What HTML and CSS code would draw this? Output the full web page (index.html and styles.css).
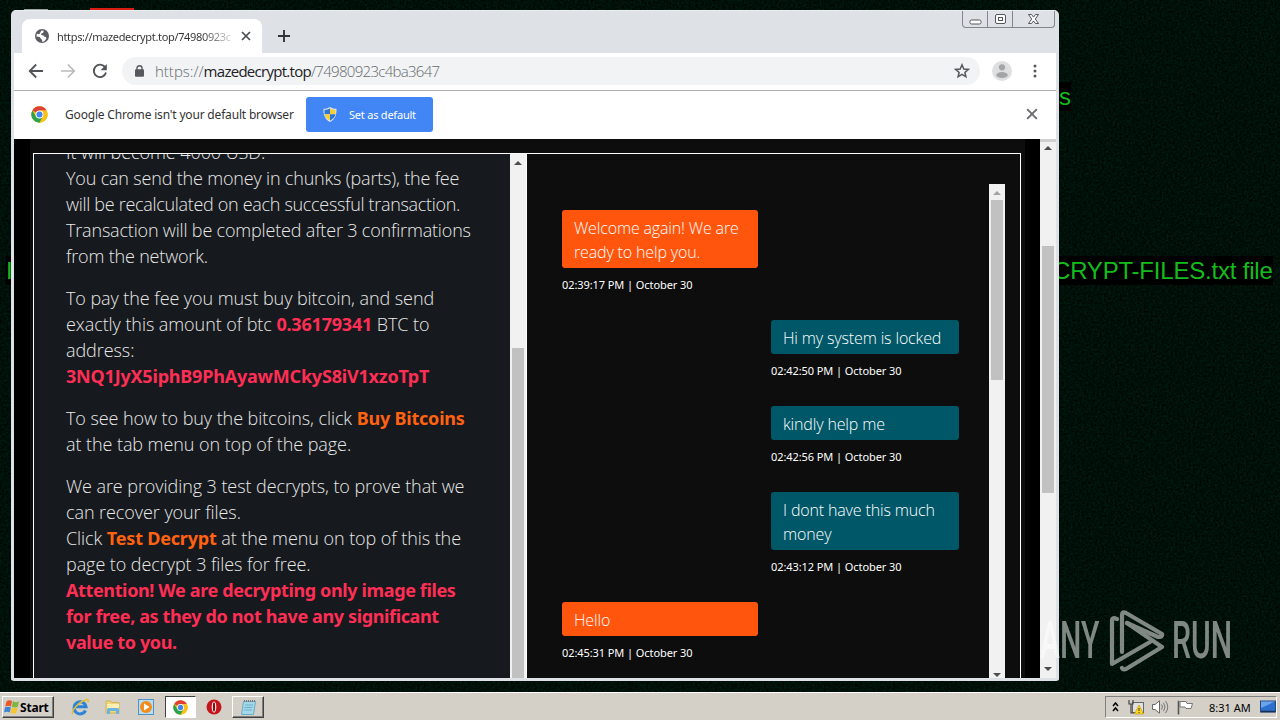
FILE: index.html
```
<!DOCTYPE html>
<html>
<head>
    <meta charset="utf-8">
    <title>Desktop</title>
    <link rel="stylesheet" href="styles.css">
</head>
<body>
    <div class="desktop">
        <svg class="wallpaper" width="1280" height="720">
            <filter id="grain" color-interpolation-filters="sRGB">
                <feTurbulence type="fractalNoise" baseFrequency="0.45" numOctaves="2" seed="4"/>
                <feColorMatrix values="0 0 0 0 0  0.16 0 0 0 -0.015  0.07 0 0 0 0  0 0 0 0 1"/>
            </filter>
            <rect width="1280" height="720" filter="url(#grain)"/>
        </svg>
        <div class="shortcut-red"></div>
        <div class="shortcut-gray"></div>
        <div class="wall-text wall-s">s</div>
        <div class="wall-text wall-left">I</div>
        <div class="wall-text wall-file">CRYPT-FILES.txt file</div>

        <div class="window">
            <div class="tab-strip">
                <div class="tab">
                    <svg class="globe" width="14" height="14" viewBox="0 0 14 14">
                        <circle cx="7" cy="7" r="7" fill="#5a5d61"/>
                        <path d="M6.2 1.5 8.8 1.8 8.2 3.8 6.3 4.5 6.2 6 8.6 6.4 9 7.6 11 8.1 11.4 9.8 9.3 12.2 7.1 13 7.2 10.9 5.6 9.6 4.8 8 1.4 7.4 1.9 4.8 4.1 5.3 5.1 4.1Z" fill="#fff"/>
                    </svg>
                    <span class="tab-title">https://mazedecrypt.top/74980923c</span>
                    <svg class="tab-close" width="10" height="10" viewBox="0 0 10 10"><path d="M1 1l8 8M9 1l-8 8" stroke="#4a4d51" stroke-width="1.7"/></svg>
                </div>
                <svg class="new-tab" width="12" height="12" viewBox="0 0 12 12"><path d="M6 0v12M0 6h12" stroke="#303338" stroke-width="1.9"/></svg>
                <div class="window-buttons">
                    <div class="wb"><svg width="13" height="11" viewBox="0 0 13 11"><rect x="1" y="6" width="11" height="4" rx="1.5" fill="#fff" stroke="#54565e"/></svg></div>
                    <div class="wb"><svg width="13" height="11" viewBox="0 0 13 11"><rect x="1.5" y=".5" width="10" height="9" rx="1.5" fill="#fff" stroke="#54565e"/><rect x="4.5" y="3.5" width="4" height="3" fill="#fff" stroke="#54565e"/></svg></div>
                    <div class="wb wb-close"><svg width="13" height="11" viewBox="0 0 13 11"><path d="M1.5.5h3l2 2.6 2-2.6h3L8.3 5l3.2 4.5h-3l-2-2.6-2 2.6h-3L4.7 5Z" fill="#fff" stroke="#54565e"/></svg></div>
                </div>
            </div>
            <div class="toolbar">
                <svg class="nav" width="16" height="16" viewBox="0 0 16 16"><path d="M15 8H2M8.2 1.5 1.7 8l6.5 6.5" fill="none" stroke="#505357" stroke-width="1.8"/></svg>
                <svg class="nav" width="16" height="16" viewBox="0 0 16 16"><path d="M1 8h13M7.8 1.5 14.3 8l-6.5 6.5" fill="none" stroke="#b9babc" stroke-width="1.6"/></svg>
                <svg class="nav" width="16" height="16" viewBox="0 0 16 16"><path d="M13.2 4.4A6.2 6.2 0 1 0 14 9.6" fill="none" stroke="#505357" stroke-width="1.9"/><path d="M14.8 1v6.2H8.6Z" fill="#505357"/></svg>
                <div class="address-bar">
                    <svg class="lock" width="9" height="12" viewBox="0 0 9 12"><rect y="4.3" width="9" height="7.4" rx="1" fill="#55585d"/><path d="M2 5V3a2.5 2.3 0 0 1 5 0v2" fill="none" stroke="#55585d" stroke-width="1.4"/></svg>
                    <span class="url"><span>https://</span><b>mazedecrypt.top</b><span class="path">/74980923c4ba3647</span></span>
                    <svg class="star" width="16" height="16" viewBox="0 0 16 16"><path d="M8 1.8 9.8 6l4.5.4-3.4 3 1 4.4L8 11.4l-3.9 2.4 1-4.4-3.4-3L6.2 6Z" fill="none" stroke="#55585d" stroke-width="1.5"/></svg>
                </div>
                <svg class="avatar" width="20" height="20" viewBox="0 0 20 20"><circle cx="10" cy="10" r="10" fill="#dedfe1"/><circle cx="10" cy="6.3" r="3.1" fill="#a5a5a7"/><ellipse cx="10" cy="14" rx="5.8" ry="3" fill="#a5a5a7"/></svg>
                <svg class="menu" width="4" height="14" viewBox="0 0 4 14"><circle cx="2" cy="2" r="1.5" fill="#55585d"/><circle cx="2" cy="7" r="1.5" fill="#55585d"/><circle cx="2" cy="12" r="1.5" fill="#55585d"/></svg>
            </div>
            <div class="infobar">
                <svg class="chrome-logo" width="17" height="17" viewBox="0 0 48 48"><use href="#chrome"/></svg>
                <span class="info-text">Google Chrome isn't your default browser</span>
                <div class="default-btn">
                    <svg width="14" height="15" viewBox="0 0 14 15">
                        <path d="M7 0c2 1.3 4 1.8 6.5 1.8C13.7 8 12 12.5 7 15 2 12.5.3 8 .5 1.8 3 1.8 5 1.3 7 0Z" fill="#dfe9f4"/>
                        <path d="M7 1.200V7.300H1.500V2.700C3.500 2.700 5.400 2.200 7 1.200Z" fill="#2f75d6"/>
                        <path d="M7 1.200c1.600 1 3.500 1.500 5.500 1.500v4.600H7Z" fill="#f7cf32"/>
                        <path d="M1.600 7.300H7v6.400C3.800 12 2 10 1.600 7.300Z" fill="#f7cf32"/>
                        <path d="M7 7.300h5.400C12 10 10.200 12 7 13.700Z" fill="#2f75d6"/>
                    </svg>
                    <span>Set as default</span>
                </div>
                <svg class="info-close" width="12" height="12" viewBox="0 0 12 12"><path d="M1.2 1.2l9.6 9.6M10.8 1.2l-9.6 9.6" stroke="#696b6f" stroke-width="1.9"/></svg>
            </div>

            <div class="page">
                <div class="page-body">
                    <div class="panels">
                        <div class="instructions">
                            <p>It will become 4000 USD.<br>
                            <span class="mid">You can send the money in chunks (parts), the fee</span><br>
                            <span class="tight">will be recalculated on each successful transaction.</span><br>
                            <span class="mid">Transaction will be completed after 3 confirmations</span><br>
                            <span class="mid">from the network.</span></p>
                            <p>To pay the fee you must buy bitcoin, and send<br>
                            exactly this amount of btc <b class="red">0.36179341</b> BTC to<br>
                            address:<br>
                            <b class="red">3NQ1JyX5iphB9PhAyawMCkyS8iV1xzoTpT</b></p>
                            <p>To see how to buy the bitcoins, click <b class="orange">Buy Bitcoins</b><br>
                            at the tab menu on top of the page.</p>
                            <p>We are providing 3 test decrypts, to prove that we<br>
                            can recover your files.<br>
                            Click <b class="orange test">Test Decrypt</b> at the menu on top of this the<br>
                            page to decrypt 3 files for free.<br>
                            <b class="red warning">Attention! We are decrypting only image files<br>
                            for free, as they do not have any significant<br>
                            value to you.</b></p>
                        </div>
                        <div class="scrollbar scroll-left">
                            <i class="arrow up"></i>
                            <div class="thumb"></div>
                        </div>
                        <div class="chat">
                            <div class="messages">
                                <div class="message support">
                                    <div class="bubble">Welcome again! We are<br>ready to help you.</div>
                                    <div class="time">02:39:17 PM | October 30</div>
                                </div>
                                <div class="message user">
                                    <div class="bubble">Hi my system is locked</div>
                                    <div class="time">02:42:50 PM | October 30</div>
                                </div>
                                <div class="message user">
                                    <div class="bubble">kindly help me</div>
                                    <div class="time">02:42:56 PM | October 30</div>
                                </div>
                                <div class="message user">
                                    <div class="bubble">I dont have this much<br>money</div>
                                    <div class="time">02:43:12 PM | October 30</div>
                                </div>
                                <div class="message support">
                                    <div class="bubble">Hello</div>
                                    <div class="time">02:45:31 PM | October 30</div>
                                </div>
                            </div>
                            <div class="scrollbar scroll-chat">
                                <i class="arrow up dim"></i>
                                <div class="thumb"></div>
                                <i class="arrow down"></i>
                            </div>
                        </div>
                    </div>
                </div>
                <div class="scrollbar scroll-page">
                    <i class="arrow up"></i>
                    <div class="thumb"></div>
                    <i class="arrow down"></i>
                </div>
            </div>
        </div>

        <div class="watermark">
            <span class="wm-text wm-any">ANY</span>
            <svg width="56" height="64" viewBox="0 0 56 64" fill="none" stroke="#fff" stroke-width="4.2" stroke-linejoin="round" stroke-linecap="round">
                <path d="M8 10 5 9Q3 9 3 12V55L41 33"/>
                <path d="M13 43V6Q13 2 17 4L53 25Q54 28 49 28L18 14"/>
                <path d="M18 14 53 38 17 60Q14 61 13 59"/>
            </svg>
            <span class="wm-text wm-run">RUN</span>
        </div>

        <div class="taskbar">
            <div class="start">
                <svg width="16" height="16" viewBox="0 0 16 16">
                    <path d="M2.5 2.5Q5 .5 8 2L7 7.5Q4.500 6 1.300 7.500Z" fill="#e8562a"/>
                    <path d="M8.800 2.300Q12 4 15 2.200L13.800 7.800Q11 9 7.800 7.800Z" fill="#7eb540"/>
                    <path d="M1.100 8.300Q4 7 6.900 8.300L5.800 13.500Q3 12 0 13.500Z" fill="#3f84d5"/>
                    <path d="M7.700 8.600Q10.500 10 13.600 8.600L12.400 14Q9.500 15.500 6.600 14Z" fill="#f6c52e"/>
                </svg>
                <span>Start</span>
            </div>
            <div class="quick">
                <svg width="18" height="18" viewBox="0 0 18 18">
                    <path d="M14.500 12.500A6 6 0 1 1 15 8.800H5" fill="none" stroke="#2b84d8" stroke-width="3"/>
                    <path d="M2 16C-1 14 7 4 16 1.500c2 0 1 2 .5 3" fill="none" stroke="#e6bd35" stroke-width="1.500"/>
                </svg>
                <svg width="18" height="18" viewBox="0 0 18 18">
                    <path d="M2 3h5l1 1.500h7V15H2Z" fill="#efd57c" stroke="#d3b354"/>
                    <path d="M3 6h12v4H3Z" fill="#fbefb4"/>
                    <path d="M3 16v-4q0-2 2-2h8q2 0 2 2v4h-3v-3H6v3Z" fill="#6ab4df"/>
                </svg>
                <svg width="18" height="18" viewBox="0 0 18 18">
                    <rect x="1.500" y="1.500" width="15" height="15" fill="#b9dcf5" stroke="#4e93cb"/>
                    <circle cx="9" cy="9" r="6" fill="#f28c1c"/>
                    <path d="M7 5.500v7L12.500 9Z" fill="#fff"/>
                </svg>
            </div>
            <div class="task active">
                <svg width="15" height="15" viewBox="0 0 48 48">
                    <g id="chrome">
                        <circle cx="24" cy="24" r="23" fill="#fbc116"/>
                        <path d="M24 24 4 12.500A23 23 0 0 1 44 12.500H24Z" fill="#de4032"/>
                        <path d="M4 12.500A23 23 0 0 0 24 47L34 30 24 24 14 29.500Z" fill="#2ba24c"/>
                        <path d="M44 12.500H24L34 30 24 47A23 23 0 0 0 44 12.500Z" fill="#fbc116"/>
                        <circle cx="24" cy="24" r="11" fill="#fff"/>
                        <circle cx="24" cy="24" r="8.500" fill="#4386f0"/>
                    </g>
                </svg>
            </div>
            <svg class="opera" width="16" height="16" viewBox="0 0 16 16"><circle cx="8" cy="8" r="7.500" fill="#c3161c"/><ellipse cx="8" cy="8" rx="2.300" ry="5.500" fill="#fff"/><ellipse cx="8" cy="8" rx="1.200" ry="4.800" fill="#8b1015"/></svg>
            <div class="task">
                <svg width="17" height="17" viewBox="0 0 17 17"><path d="M3.500 2.500h12l-2 13h-12Z" fill="#a5d9e9" stroke="#6eaac4"/><path d="M4 2h12" stroke="#777" stroke-width="2" stroke-dasharray="1 1"/><path d="M5 6h8M4.500 8.500h8M4 11h8" stroke="#6bb1cb"/></svg>
            </div>
            <div class="tray">
                <svg width="7" height="10" viewBox="0 0 7 10"><path d="M1 4l2.500-3L6 4M1 9l2.500-3L6 9" fill="none" stroke="#000" stroke-width="1.500"/></svg>
                <svg class="tray-net" width="16" height="16" viewBox="0 0 16 16"><rect x="4.500" y="3.500" width="11" height="10" fill="#e1e2df" stroke="#65676a"/><path d="M1 1v4h4V1M3 5v9h3" fill="none" stroke="#444" stroke-width="1.200"/><path d="M11 6l4.500 9h-9Z" fill="#ffd91f" stroke="#bb9400" stroke-width=".6"/><path d="M11 9v3M11 13v1" stroke="#333"/></svg>
                <svg class="tray-sound" width="17" height="14" viewBox="0 0 17 14"><path d="M.5 4.500H3L7.500.8v12.400L3 9.500H.5Z" fill="#fff" stroke="#666"/><path d="M9.500 4.500q2 2.500 0 5M11.500 2.800q3 4.200 0 8.400M13.500 1q4.500 6 0 12" fill="none" stroke="#777"/></svg>
                <svg class="tray-flag" width="17" height="15" viewBox="0 0 17 15"><path d="M1.500 14.500V.8" stroke="#555" stroke-width="1.600"/><path d="M3 1.500h6l1 2h5.500l-1.500 5H9l-1-1.500H3Z" fill="#fff" stroke="#777"/></svg>
                <span class="clock">8:31 AM</span>
                <svg class="tray-desk" width="16" height="14" viewBox="0 0 16 14"><rect x=".5" y="1" width="15" height="11" fill="#2c6fce" stroke="#24477c"/><path d="M1 1.500h14L1 8Z" fill="#6aa4ea"/><path d="M1 11.500h14" stroke="#172e55" stroke-width="1.500"/></svg>
            </div>
        </div>
    </div>
</body>
</html>
```
FILE: styles.css
```
* {
    box-sizing: border-box;
}

body {
    margin: 0;
    overflow: hidden;
    font-family: "Noto Sans", "Open Sans", sans-serif;
}

svg {
    display: block;
    flex-shrink: 0;
}

.desktop {
    position: relative;
    width: 1280px;
    height: 720px;
    background-color: #00100a;
    overflow: hidden;
}

.wallpaper {
    position: absolute;
    left: 0;
    top: 0;
}

.shortcut-red,
.shortcut-gray {
    position: absolute;
    top: 8px;
    left: 90px;
    width: 44px;
    height: 4px;
    background-color: #d91d12;
}

.shortcut-gray {
    top: 9px;
    left: 24px;
    width: 24px;
    background-color: #9aa09d;
}

.wall-text {
    position: absolute;
    height: 29px;
    line-height: 30px;
    font-family: "Liberation Sans", sans-serif;
    font-size: 24px;
    color: #14bd1c;
    background-color: #000;
    white-space: nowrap;
}

.wall-s {
    left: 1059px;
    top: 82px;
}

.wall-left {
    left: 6px;
    top: 256px;
}

.wall-file {
    left: 1053px;
    top: 256px;
    letter-spacing: -0.2px;
}

/* browser window */
.window {
    position: absolute;
    left: 11px;
    top: 10px;
    width: 1048px;
    height: 671px;
    display: flex;
    flex-direction: column;
    border: 3px solid #dee1e6;
    border-top: 1px solid #eceef1;
    border-radius: 5px 5px 3px 3px;
    background-color: #fff;
    overflow: hidden;
}

.tab-strip {
    display: flex;
    align-items: flex-start;
    height: 42px;
    flex-shrink: 0;
    background-color: #dee1e6;
}

.tab {
    display: flex;
    align-items: center;
    width: 240px;
    height: 34px;
    margin: 8px 0 0 8px;
    padding-left: 13px;
    border-radius: 8px 8px 0 0;
    background-color: #fff;
}

.tab-title {
    width: 176px;
    margin-left: 8px;
    font-size: 11px;
    letter-spacing: -0.34px;
    overflow: hidden;
    white-space: nowrap;
    color: transparent;
    background: linear-gradient(to right, #333 145px, rgba(60, 60, 60, 0.15) 176px);
    -webkit-background-clip: text;
    background-clip: text;
}

.tab-close {
    margin-left: 8px;
}

.new-tab {
    margin: 19px 0 0 16px;
}

.window-buttons {
    display: flex;
    width: 93px;
    height: 17px;
    margin-left: auto;
    margin-right: 1px;
    border: 1px solid #85878f;
    border-top: 0;
    border-radius: 0 0 4px 4px;
}

.wb {
    display: flex;
    align-items: center;
    justify-content: center;
    width: 25px;
    border-right: 1px solid #85878f;
}

.wb-close {
    width: 41px;
    border-right: 0;
}

.toolbar {
    display: flex;
    align-items: center;
    height: 38px;
    flex-shrink: 0;
    padding-left: 14px;
    padding-bottom: 2px;
    border-bottom: 1px solid #b0b0b0;
}

.nav {
    margin-right: 16px;
}

.address-bar {
    display: flex;
    align-items: center;
    width: 858px;
    height: 28px;
    margin-left: -2px;
    padding: 0 10px 0 13px;
    border-radius: 14px;
    background-color: #f1f3f4;
}

.url {
    margin-left: 11px;
    font-family: "Open Sans", sans-serif;
    font-size: 15px;
    font-weight: 300;
    color: #66696d;
}

.url b {
    font-weight: 400;
    letter-spacing: -0.72px;
    color: #202124;
}

.path {
    letter-spacing: -0.7px;
}

.star {
    margin-left: auto;
}

.avatar {
    margin-left: 12px;
}

.menu {
    margin-left: 21px;
}

.infobar {
    display: flex;
    align-items: center;
    height: 48px;
    flex-shrink: 0;
    padding: 0 18px 2px 17px;
}

.info-text {
    width: 229px;
    margin-left: 17px;
    font-size: 12px;
    letter-spacing: -0.18px;
    white-space: nowrap;
    color: #333;
}

.default-btn {
    display: flex;
    align-items: center;
    width: 127px;
    height: 35px;
    margin-left: 12px;
    padding-left: 17px;
    border-radius: 3px;
    background-color: #4285f4;
    color: #fff;
    font-size: 11px;
    letter-spacing: -0.22px;
    white-space: nowrap;
}

.default-btn span {
    margin-left: 12px;
}

.info-close {
    margin-left: auto;
}

/* page */
.page {
    display: flex;
    height: 539px;
    background-color: #000;
}

.page-body {
    width: 1011px;
    margin-right: 15px;
    padding: 14px 4px 0 19px;
    background: linear-gradient(to right, #000 16px, #0d0d0d 16px);
}

.panels {
    display: flex;
    height: 525px;
    border: 1px solid #fff;
    border-bottom: 0;
    overflow: hidden;
}

.instructions {
    width: 476px;
    height: 524px;
    flex-shrink: 0;
    padding-left: 32px;
    overflow: hidden;
    background-color: #16191d;
    font-family: "Open Sans", sans-serif;
    font-size: 18px;
    font-weight: 300;
    line-height: 26px;
    letter-spacing: -0.07px;
    color: #e8e8e8;
    white-space: nowrap;
}

.instructions p {
    margin: 0 0 16px;
}

.instructions p:first-child {
    margin-top: -16px;
    padding-top: 1px;
}

.instructions b {
    font-family: "Noto Sans", sans-serif;
    font-weight: 700;
    letter-spacing: -0.2px;
}

.instructions .mid {
    letter-spacing: -0.18px;
}

.instructions .tight {
    letter-spacing: -0.31px;
}

.instructions .warning {
    letter-spacing: -0.37px;
}

.red {
    color: #ff2e55;
}

.orange {
    color: #ff6210;
}

/* scrollbars */
.scrollbar {
    display: flex;
    flex-direction: column;
    align-items: center;
    width: 16px;
    flex-shrink: 0;
    background-color: #f1f1f1;
}

.arrow {
    width: 0;
    height: 0;
    margin: 7px 0 5px;
    border: 4px solid transparent;
    border-top-width: 0;
    border-bottom: 4px solid #4d4d4d;
}

.arrow.dim {
    border-bottom-color: #a3a3a3;
}

.arrow.down {
    margin: auto 0 1px;
    border-top: 4px solid #4d4d4d;
    border-bottom: 0;
}

.thumb {
    width: 12px;
    background-color: #c1c1c1;
}

.scroll-left {
    width: 17px;
    border-right: 1px solid #fff;
}

.scroll-left .thumb {
    height: 330px;
    margin-top: 178px;
}

.scroll-chat {
    height: 494px;
}

.scroll-chat .thumb {
    height: 180px;
}

.scroll-page {
    border-top: 3px solid #d0d0d0;
}

.scroll-page .arrow.up {
    margin-top: 4px;
}

.scroll-page .thumb {
    height: 247px;
    margin-top: 91px;
}

.scroll-page .arrow.down {
    margin-bottom: 7px;
}

/* chat */
.chat {
    display: flex;
    flex-grow: 1;
    padding-top: 30px;
    background-color: #0d0d0d;
}

.messages {
    display: flex;
    flex-direction: column;
    width: 462px;
    padding: 26px 30px 0 35px;
}

.message {
    width: 196px;
    margin-bottom: 18px;
}

.user {
    width: 188px;
    align-self: flex-end;
}

.bubble {
    padding: 6px 12px 4px;
    border-radius: 3px;
    background-color: #ff550d;
    font-family: "Open Sans", sans-serif;
    font-size: 16px;
    font-weight: 300;
    line-height: 24px;
    letter-spacing: -0.15px;
    color: #fff;
    white-space: nowrap;
}

.user .bubble {
    background-color: #005768;
}

.time {
    font-size: 11px;
    line-height: 34px;
    letter-spacing: -0.08px;
    color: #fff;
    white-space: nowrap;
}

/* watermark */
.watermark {
    position: absolute;
    left: 1040px;
    top: 609px;
    display: flex;
    align-items: center;
    height: 64px;
    opacity: 0.5;
}

.watermark svg {
    margin: 0 7px 0 8px;
}

.wm-text {
    width: 61px;
    font-family: "Roboto", sans-serif;
    font-size: 51px;
    font-weight: 500;
    line-height: 66px;
    color: #fff;
    transform: scaleX(0.59);
    transform-origin: left;
}

/* taskbar */
.taskbar {
    position: absolute;
    left: 0;
    bottom: 0;
    display: flex;
    align-items: center;
    width: 1280px;
    height: 28px;
    padding: 1px 3px 0 2px;
    border-top: 1px solid #fff;
    background-color: #d4d0c8;
}

.start,
.task {
    display: flex;
    align-items: center;
    height: 22px;
    border: 1px solid #404040;
    border-top-color: #fff;
    border-left-color: #fff;
    box-shadow: inset -1px -1px 0 #808080;
}

.start {
    width: 52px;
    padding-left: 1px;
    font-size: 12px;
    font-weight: 700;
    letter-spacing: -0.2px;
}

.quick {
    display: flex;
    gap: 15px;
    margin-left: 17px;
}

.task {
    justify-content: center;
    width: 32px;
}

.task.active {
    width: 31px;
    margin-left: 10px;
    background-color: #fff;
    border-color: #404040 #fff #fff #404040;
    box-shadow: none;
}

.opera {
    margin: 0 10px 0 10px;
}

.tray {
    display: flex;
    align-items: center;
    width: 172px;
    height: 22px;
    margin-left: auto;
    padding-left: 6px;
    border: 1px solid #808080;
    border-right-color: #fff;
    border-bottom-color: #fff;
}

.tray-net {
    margin-left: 9px;
}

.tray-sound,
.tray-flag {
    margin-left: 8px;
}

.clock {
    width: 42px;
    margin-left: 15px;
    font-size: 11px;
    white-space: nowrap;
}

.tray-desk {
    margin-left: 9px;
}
```
